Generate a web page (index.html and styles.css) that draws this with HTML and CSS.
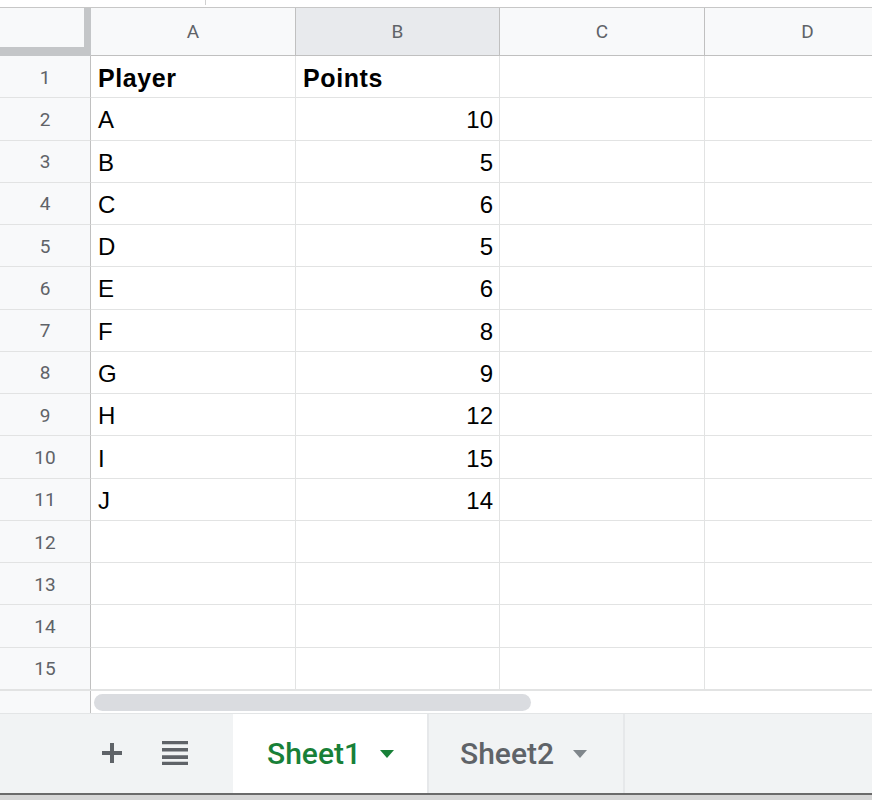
FILE: index.html
```html
<!DOCTYPE html>
<html>
<head>
<meta charset="utf-8">
<link rel="stylesheet" href="styles.css">
</head>
<body>
<div class="app">
  <div class="topstrip"><span class="tick"></span></div>
  <div class="grid">
    <div class="corner"></div>
    <div class="colhead">A</div>
    <div class="colhead sel">B</div>
    <div class="colhead">C</div>
    <div class="colhead last">D</div>

    <div class="rowhead">1</div><div class="cell bold">Player</div><div class="cell bold">Points</div><div class="cell"></div><div class="cell last"></div>
    <div class="rowhead">2</div><div class="cell">A</div><div class="cell num">10</div><div class="cell"></div><div class="cell last"></div>
    <div class="rowhead">3</div><div class="cell">B</div><div class="cell num">5</div><div class="cell"></div><div class="cell last"></div>
    <div class="rowhead">4</div><div class="cell">C</div><div class="cell num">6</div><div class="cell"></div><div class="cell last"></div>
    <div class="rowhead">5</div><div class="cell">D</div><div class="cell num">5</div><div class="cell"></div><div class="cell last"></div>
    <div class="rowhead">6</div><div class="cell">E</div><div class="cell num">6</div><div class="cell"></div><div class="cell last"></div>
    <div class="rowhead">7</div><div class="cell">F</div><div class="cell num">8</div><div class="cell"></div><div class="cell last"></div>
    <div class="rowhead">8</div><div class="cell">G</div><div class="cell num">9</div><div class="cell"></div><div class="cell last"></div>
    <div class="rowhead">9</div><div class="cell">H</div><div class="cell num">12</div><div class="cell"></div><div class="cell last"></div>
    <div class="rowhead">10</div><div class="cell">I</div><div class="cell num">15</div><div class="cell"></div><div class="cell last"></div>
    <div class="rowhead">11</div><div class="cell">J</div><div class="cell num">14</div><div class="cell"></div><div class="cell last"></div>
    <div class="rowhead">12</div><div class="cell"></div><div class="cell"></div><div class="cell"></div><div class="cell last"></div>
    <div class="rowhead">13</div><div class="cell"></div><div class="cell"></div><div class="cell"></div><div class="cell last"></div>
    <div class="rowhead">14</div><div class="cell"></div><div class="cell"></div><div class="cell"></div><div class="cell last"></div>
    <div class="rowhead">15</div><div class="cell"></div><div class="cell"></div><div class="cell"></div><div class="cell last"></div>
  </div>
  <div class="hscroll">
    <div class="hs-left"></div>
    <div class="hs-track"><div class="thumb"></div></div>
  </div>
  <div class="tabbar">
    <div class="tools">
      <svg class="ico" width="24" height="24" viewBox="0 0 24 24"><path d="M12 2v20M2 12h20" stroke="#5f6368" stroke-width="4" fill="none"/></svg>
      <svg class="ico" width="26" height="24" viewBox="0 0 26 24"><path d="M0 2h26M0 9.3h26M0 16.6h26M0 23h26" stroke="#5f6368" stroke-width="3.6" fill="none" transform="translate(0,-0.5)"/></svg>
    </div>
    <div class="tab active"><span>Sheet1</span><svg width="14" height="8" viewBox="0 0 14 8"><path d="M0 0h14L7 8z" fill="#188038"/></svg></div>
    <div class="tab"><span>Sheet2</span><svg width="14" height="8" viewBox="0 0 14 8"><path d="M0 0h14L7 8z" fill="#80868b"/></svg></div>
    <div class="rest"></div>
  </div>
  <div class="bottom"></div>
</div>
</body>
</html>
```

FILE: styles.css
```css
html, body {
  margin: 0;
  padding: 0;
  background: #ffffff;
}
.app {
  width: 872px;
  height: 800px;
  overflow: hidden;
  display: flex;
  flex-direction: column;
  font-family: "Liberation Sans", Arial, sans-serif;
}
.topstrip {
  height: 7px;
  border-bottom: 1px solid #c7c7c7;
  background: #ffffff;
  position: relative;
}
.tick {
  position: absolute;
  left: 205px;
  top: 0;
  width: 1px;
  height: 5px;
  background: #d0d0d0;
}
.grid {
  display: grid;
  grid-template-columns: 91px 205px 204px 205px 205px;
  grid-template-rows: 48px repeat(15, 42.27px);
}
.grid > div {
  box-sizing: border-box;
  border-right: 1px solid #e2e3e3;
  border-bottom: 1px solid #e2e3e3;
  display: flex;
  align-items: center;
  overflow: hidden;
  white-space: nowrap;
}
.grid > .corner {
  background: #f8f9fa;
  border-right: 7px solid #c4c6c8;
  border-bottom: 9px solid #c4c6c8;
}
.grid > .colhead {
  background: #f8f9fa;
  justify-content: center;
  color: #5f6368;
  font-family: Roboto, "Liberation Sans", sans-serif;
  font-size: 19px;
  border-right: 1px solid #c0c0c0;
  border-bottom: 1px solid #c0c0c0;
}
.grid > .colhead.sel {
  background: #e8eaed;
}
.grid > .rowhead {
  background: #f8f9fa;
  justify-content: center;
  color: #5f6368;
  font-family: Roboto, "Liberation Sans", sans-serif;
  font-size: 19px;
  border-right: 1px solid #c0c0c0;
  padding-top: 1px;
}
.grid > .cell {
  font-size: 24px;
  color: #000000;
  padding: 3px 7px 0 7px;
}
.grid > .cell.bold {
  font-weight: bold;
  font-size: 25px;
  letter-spacing: 0.6px;
  padding-left: 7px;
}
.grid > .cell.num {
  justify-content: flex-end;
  padding-right: 6px;
}
.grid > .last {
  border-right: none;
}
.hscroll {
  height: 23px;
  display: flex;
  border-top: 1px solid #e2e3e3;
  box-sizing: border-box;
}
.hs-left {
  width: 91px;
  box-sizing: border-box;
  background: #f8f9fa;
  border-right: 1px solid #c0c0c0;
}
.hs-track {
  flex: 1;
  padding: 3px 0 2px 3px;
}
.thumb {
  width: 437px;
  height: 17px;
  border-radius: 9px;
  background: #dadce0;
}
.tabbar {
  height: 80px;
  box-sizing: border-box;
  border-top: 1px solid #e3e5e6;
  background: #f1f3f4;
  display: flex;
}
.tools {
  width: 233px;
  display: flex;
  align-items: center;
  padding-left: 100px;
  gap: 38px;
  box-sizing: border-box;
}
.tab {
  width: 196px;
  box-sizing: border-box;
  display: flex;
  align-items: center;
  gap: 19px;
  padding-left: 31px;
  font-family: Roboto, "Liberation Sans", sans-serif;
  font-weight: 500;
  font-size: 30px;
  color: #5f6368;
  border-right: 2px solid #e6e8ea;
}
.tab.active {
  width: 196px;
  background: #ffffff;
  color: #188038;
  padding-left: 34px;
  border-right: 2px solid #e6e8ea;
}
.tab svg {
  margin-top: 2px;
}
.rest {
  flex: 1;
}
.bottom {
  flex: 1;
  border-top: 2px solid #6a6a6a;
  background: #d6d6d6;
}
```
